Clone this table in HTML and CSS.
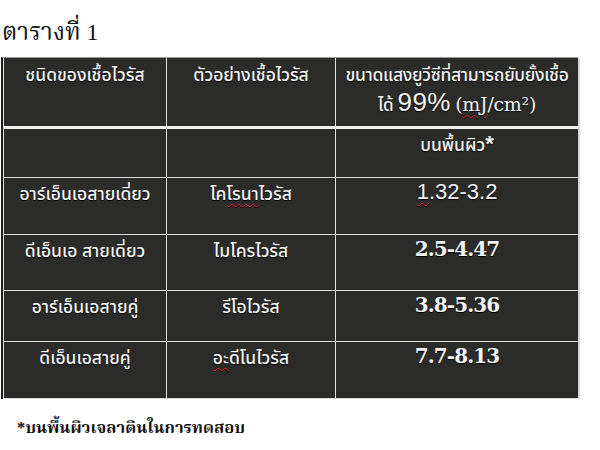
FILE: index.html
```html
<!DOCTYPE html>
<html lang="th">
<head>
<meta charset="utf-8">
<title>ตารางที่ 1</title>
<link rel="stylesheet" href="styles.css">
</head>
<body>
<div class="page">
  <h1 class="title">ตารางที่ 1</h1>
  <div class="frame">
    <table class="uv">
      <tr class="r-head">
        <td class="c1">ชนิดของเชื้อไวรัส</td>
        <td class="c2">ตัวอย่างเชื้อไวรัส</td>
        <td class="c3 head3">ขนาดแสงยูวีซีที่สามารถยับยั้งเชื้อ<br><span class="line2"><span class="thai-sm">ได้</span> <span class="pct">99%</span> <span class="unit">(<span class="sq">mJ</span>/cm²)</span></span></td>
      </tr>
      <tr class="r-sub">
        <td class="c1"></td>
        <td class="c2"></td>
        <td class="c3 sub">บนพื้นผิว<span class="star">*</span></td>
      </tr>
      <tr class="r-a">
        <td class="c1 th">อาร์เอ็นเอสายเดี่ยว</td>
        <td class="c2 th">โค<span class="sq">โรนา</span>ไวรัส</td>
        <td class="c3 num sans"><span class="sq">1</span>.32-3.2</td>
      </tr>
      <tr class="r-b">
        <td class="c1 th">ดีเอ็นเอ สายเดี่ยว</td>
        <td class="c2 th">ไมโครไวรัส</td>
        <td class="c3 num">2.5-4.47</td>
      </tr>
      <tr class="r-c">
        <td class="c1 th">อาร์เอ็นเอสายคู่</td>
        <td class="c2 th">รีโอไวรัส</td>
        <td class="c3 num">3.8-5.36</td>
      </tr>
      <tr class="r-d">
        <td class="c1 th">ดีเอ็นเอสายคู่</td>
        <td class="c2 th"><span class="sq">อะ</span>ดีโนไวรัส</td>
        <td class="c3 num">7.7-8.13</td>
      </tr>
    </table>
  </div>
  <p class="note">*บนพื้นผิวเจลาตินในการทดสอบ</p>
</div>
</body>
</html>
```

FILE: styles.css
```css
html, body {
  margin: 0;
  padding: 0;
  background: #ffffff;
}

.page {
  width: 600px;
  height: 450px;
  overflow: hidden;
}

.title {
  margin: 0;
  height: 57px;
  box-sizing: border-box;
  padding: 15px 0 0 2px;
  font-family: "Liberation Serif", "Noto Serif Thai", serif;
  font-weight: normal;
  font-size: 24px;
  line-height: 34px;
  color: #111;
}

.frame {
  margin-left: 1px;
  width: 577px;
  border-left: 2px solid #1c1c1c;
  border-top: 1px solid #9a9a9a;
  box-sizing: border-box;
}

.uv {
  width: 575px;
  border-collapse: separate;
  border-spacing: 0;
  background: #2b2b29;
  border-left: 1px solid #e6e6e6;
  border-right: 2px solid #d6d6d6;
  color: #f4f4f4;
  font-family: "Noto Sans", "Noto Sans Thai", "Liberation Sans", sans-serif;
  table-layout: fixed;
}

.uv td {
  padding: 0;
  text-align: center;
  vertical-align: top;
  border-right: 1px solid #e2e2e2;
  border-bottom: 1px solid #dcdcdc;
  text-shadow: 0 1px 1px #000;
  font-weight: 500;
}

.uv td.c3 {
  border-right: none;
}

.c1 { width: 162px; }
.c2 { width: 168px; }
.c3 { width: 242px; }

.r-head { height: 71px; }
.r-head td {
  border-bottom: 3px solid #f0f0f0;
  font-size: 17.5px;
  line-height: 26px;
  padding-top: 3px;
}
.r-sub { height: 49px; }
.r-a { height: 57px; }
.r-b { height: 56px; }
.r-c { height: 51px; }
.r-d { height: 57px; }

.head3 {
  font-size: 17px;
  letter-spacing: -0.3px;
}

.line2 {
  display: inline-block;
  margin-top: 1px;
  line-height: 28px;
}

.thai-sm {
  font-size: 17px;
}

.pct {
  font-family: "Liberation Sans", sans-serif;
  font-size: 26px;
  font-weight: normal;
  letter-spacing: 0.5px;
}

.unit {
  font-family: "DejaVu Serif", serif;
  font-size: 19px;
  font-weight: normal;
}

.uv td.sub {
  font-size: 17.5px;
  line-height: 26px;
  padding-top: 2px;
}

.star {
  font-family: "Liberation Sans", sans-serif;
  font-weight: bold;
  font-size: 22px;
}

.uv td.th {
  font-size: 17.5px;
  line-height: 26px;
  padding-top: 2px;
}

.uv td.num {
  font-family: "DejaVu Serif", serif;
  font-weight: bold;
  font-size: 20px;
  line-height: 26px;
  padding-top: 1px;
  letter-spacing: -0.9px;
}

.uv td.num.sans {
  font-family: "Liberation Sans", sans-serif;
  font-weight: normal;
  font-size: 22px;
  letter-spacing: 0;
}

.sq {
  text-decoration: underline wavy #d22;
  text-decoration-thickness: 1px;
  text-underline-offset: 3px;
}

.note {
  margin: 17px 0 0 17px;
  font-family: "Liberation Serif", "Noto Serif Thai", serif;
  font-weight: bold;
  font-size: 16.5px;
  line-height: 24px;
  color: #111;
}
```
